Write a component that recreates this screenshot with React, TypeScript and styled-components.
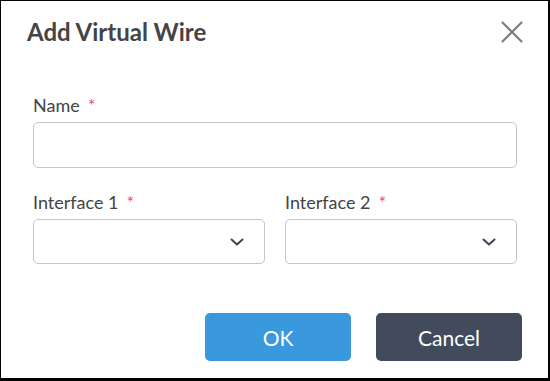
import React from "react";
import styled, { createGlobalStyle } from "styled-components";

const GlobalStyle = createGlobalStyle`
  html, body {
    margin: 0;
    padding: 0;
    background: #fff;
  }
  * {
    box-sizing: border-box;
  }
`;

const Dialog = styled.div`
  width: 550px;
  height: 381px;
  background: #fff;
  border-top: 1px solid #000;
  border-left: 1px solid #000;
  border-right: 2px solid #000;
  border-bottom: 3px solid #000;
  font-family: Lato, "Open Sans", sans-serif;
  color: #444;
  display: flex;
  flex-direction: column;
`;

const Header = styled.div`
  display: flex;
  align-items: center;
  justify-content: space-between;
  padding: 14px 25px 0 26px;
  height: 48px;
`;

const Title = styled.h1`
  margin: 0;
  font-size: 24px;
  font-weight: 700;
  color: #444;
  line-height: 30px;
`;

const CloseButton = styled.button`
  border: none;
  background: none;
  padding: 0;
  width: 22px;
  height: 22px;
  cursor: pointer;
  display: flex;
  align-items: center;
  justify-content: center;
`;

const Body = styled.div`
  padding: 45px 31px 0 32px;
  display: flex;
  flex-direction: column;
`;

const Row = styled.div`
  display: flex;
  gap: 20px;
  margin-top: 23px;
`;

const Field = styled.div`
  flex: 1;
  display: flex;
  flex-direction: column;
`;

const Label = styled.label`
  font-size: 18px;
  line-height: 22px;
  color: #444;
  margin-bottom: 6px;
`;

const Required = styled.span`
  color: #e8506a;
  margin-left: 8px;
`;

const Input = styled.input`
  height: 46px;
  border: 1px solid #c4c4c4;
  border-radius: 5px;
  padding: 0 12px;
  font-family: inherit;
  font-size: 16px;
  outline: none;
`;

const Select = styled.div`
  height: 45px;
  border: 1px solid #c4c4c4;
  border-radius: 5px;
  display: flex;
  align-items: center;
  justify-content: flex-end;
  padding-right: 20px;
`;

const Footer = styled.div`
  display: flex;
  justify-content: flex-end;
  gap: 25px;
  padding: 0 26px 0 0;
  margin-top: 49px;
`;

const Button = styled.button<{ $primary?: boolean }>`
  width: 146px;
  height: 48px;
  border: none;
  border-radius: 5px;
  font-family: Lato, "Open Sans", sans-serif;
  font-size: 21px;
  color: #fff;
  background: ${(p) => (p.$primary ? "#3a99dc" : "#414b5b")};
  cursor: pointer;
`;

const Chevron = () => (
  <svg width="14" height="8" viewBox="0 0 14 8" fill="none">
    <path d="M1.5 1.5 L7 6.5 L12.5 1.5" stroke="#3c4452" strokeWidth="2" strokeLinecap="round" strokeLinejoin="round" />
  </svg>
);

const CloseIcon = () => (
  <svg width="22" height="22" viewBox="0 0 22 22" fill="none">
    <path d="M1.5 1.5 L20.5 20.5 M20.5 1.5 L1.5 20.5" stroke="#7a7a7a" strokeWidth="2" strokeLinecap="round" />
  </svg>
);

export default function App() {
  return (
    <>
      <GlobalStyle />
      <Dialog>
        <Header>
          <Title>Add Virtual Wire</Title>
          <CloseButton aria-label="Close">
            <CloseIcon />
          </CloseButton>
        </Header>
        <Body>
          <Field>
            <Label>
              Name<Required>*</Required>
            </Label>
            <Input type="text" />
          </Field>
          <Row>
            <Field>
              <Label>
                Interface 1<Required>*</Required>
              </Label>
              <Select>
                <Chevron />
              </Select>
            </Field>
            <Field>
              <Label>
                Interface 2<Required>*</Required>
              </Label>
              <Select>
                <Chevron />
              </Select>
            </Field>
          </Row>
        </Body>
        <Footer>
          <Button $primary>OK</Button>
          <Button>Cancel</Button>
        </Footer>
      </Dialog>
    </>
  );
}
